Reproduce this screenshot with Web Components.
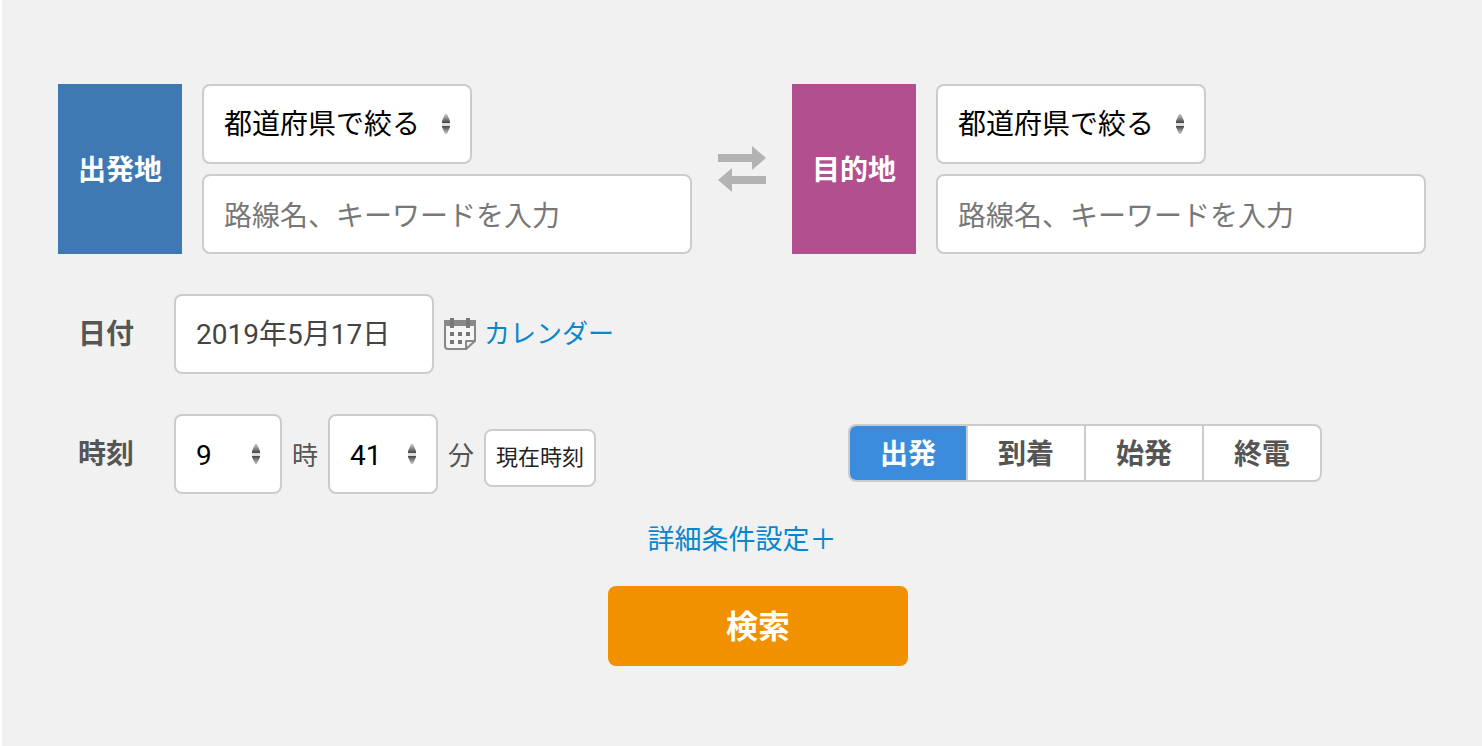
<!DOCTYPE html>
<html lang="ja">
<head>
<meta charset="utf-8">
<meta name="viewport" content="width=device-width, initial-scale=1">
<title>時刻表検索</title>
<style>
  body {
    margin: 0;
    font: 28px/40px Roboto, "Noto Sans CJK JP", sans-serif;
    color: #555;
    background: #fff;
  }
</style>
</head>
<body>
<timetable-search></timetable-search>

<script>
/**
 * Timetable search form
 *
 * <timetable-search> holds the whole form. The smaller elements are the place
 * picker, the pulldown around a native select and the segmented radio tabs.
 */

// Styles shared by every boxed field
const fieldStyle = `
  box-sizing: border-box;
  height: 80px;
  margin: 0;
  padding: 4px 20px 0;
  border: 2px solid #ccc;
  border-radius: 8px;
  background: #fff;
  font: inherit;
`;

// Pulldown : draws the box and the arrows around a slotted select
class PulldownBox extends HTMLElement {

  constructor() {
    super();
    const sdom = this.attachShadow({mode: 'open'});
    sdom.innerHTML = `
      <style>
        :host { display: inline-grid; align-items: center; }
        ::slotted(select) {
          ${fieldStyle}
          grid-area: 1 / 1;
          width: 100%;
          padding-top: var(--select-top, 4px);
          padding-right: 48px;
          appearance: none;
          color: #000;
        }
        svg { grid-area: 1 / 1; justify-self: end; margin-right: 22px; pointer-events: none; z-index: 1; }
      </style>
      <slot></slot>
      <svg width="8" height="20" viewBox="0 0 8 20" aria-hidden="true">
        <defs>
          <linearGradient id="up" x1="0" y1="0" x2="0" y2="1">
            <stop offset="0" stop-color="#ccc"/><stop offset="1" stop-color="#444"/>
          </linearGradient>
          <linearGradient id="down" x1="0" y1="0" x2="0" y2="1">
            <stop offset="0" stop-color="#444"/><stop offset="1" stop-color="#ccc"/>
          </linearGradient>
        </defs>
        <rect y="8" width="8" height="4" fill="#ddd"/>
        <path d="M3 0h2l3 7v2H0V7z" fill="url(#up)"/>
        <path d="M0 12h8v1l-3 7H3l-3-7z" fill="url(#down)"/>
      </svg>
    `;
  }

}

// Place picker : coloured heading, prefecture filter and keyword
class PlacePicker extends HTMLElement {

  constructor() {
    super();
    const sdom = this.attachShadow({mode: 'open'});
    sdom.innerHTML = `
      <style>
        :host { display: flex; gap: 20px; }
        label {
          display: flex; align-items: center; flex: none;
          padding: 4px 20px 0;
          background: var(--place-color, #3e79b4);
          color: #fff; font-weight: bold;
        }
        .fields { display: flex; flex-direction: column; align-items: flex-start; gap: 10px; flex: 1; min-width: 0; }
        pulldown-box { --select-top: 2px; width: 270px; }
        input { ${fieldStyle} width: 100%; color: #444; }
        input::placeholder { color: #777; opacity: 1; }
      </style>
      <label for="word"><slot></slot></label>
      <div class="fields">
        <pulldown-box>
          <select aria-label="都道府県"><option>都道府県で絞る</option></select>
        </pulldown-box>
        <input id="word" type="text" placeholder="路線名、キーワードを入力">
      </div>
    `;
  }

}

// Segment tabs : one radio for each name in the 'items' attribute
class SegmentTabs extends HTMLElement {

  constructor() {
    super();
    this.attachShadow({mode: 'open'});
  }

  connectedCallback() {
    const items = this.getAttribute('items').split(',');
    this.shadowRoot.innerHTML = `
      <style>
        :host {
          display: flex; overflow: hidden;
          border: 2px solid #ccc; border-radius: 8px;
          background: #fff; font-weight: bold;
        }
        input { position: absolute; opacity: 0; margin: 0; }
        label { width: 116px; padding-top: 4px; line-height: 50px; text-align: center; cursor: pointer; }
        label + input + label { border-left: 2px solid #ccc; }
        input:checked + label { background: #3c8cdd; color: #fff; }
        input:focus-visible + label { text-decoration: underline; }
      </style>
      ${items.map((item, i) => `
        <input type="radio" name="type" id="type${i}"${i === 0 ? ' checked' : ''}>
        <label for="type${i}">${item}</label>
      `).join('')}
    `;
  }

}

// Whole form
class TimetableSearch extends HTMLElement {

  constructor() {
    super();
    const sdom = this.attachShadow({mode: 'open'});
    sdom.innerHTML = `
      <style>
        :host { display: block; box-sizing: border-box; min-height: 100vh; margin-left: 2px; padding: 84px 56px 80px; background: #f1f1f1; }
        form { display: flex; flex-direction: column; gap: 40px; }
        .places, .row, .time, .date { display: flex; align-items: center; }
        .row { height: 80px; }
        place-picker { flex: 1; min-width: 0; }
        .goal { --place-color: #b14f8f; }
        button { margin: 0; font: inherit; cursor: pointer; }
        .swap { display: flex; justify-content: center; width: 100px; padding: 0; border: 0; background: none; }
        .title { width: 96px; margin-left: 20px; padding-top: 2px; font-weight: bold; }
        a { color: #0787cd; font-size: 27px; text-decoration: none; }
        .date input { ${fieldStyle} width: 260px; padding: 0 20px 4px; color: #444; }
        .calendar { display: flex; align-items: center; gap: 8px; margin-left: 10px; font-size: 26px; }
        .time { align-items: baseline; gap: 10px; font-size: 26px; }
        .time pulldown-box { width: 108px; font-size: 28px; }
        .time .minute { width: 110px; }
        .now {
          height: 58px; padding: 0 10px;
          border: 2px solid #ccc; border-radius: 8px;
          background: #fff; color: #222; font-size: 22px;
        }
        segment-tabs { margin: 0 104px 2px auto; }
        .actions { display: flex; flex-direction: column; align-items: center; gap: 26px; margin-top: -14px; }
        .search {
          width: 300px; height: 80px; margin-left: 32px; padding: 2px 0 0;
          border: 0; border-radius: 8px;
          background: #f29100; color: #fff; font-size: 32px; font-weight: bold;
        }
      </style>
      <form>
        <div class="places">
          <place-picker class="start">出発地</place-picker>
          <button class="swap" type="button" aria-label="入れ替え">
            <svg width="48" height="46" viewBox="0 0 48 46" fill="#b3b3b3">
              <path d="M0 8h34V0l14 12-14 12v-8H0z"/>
              <path d="M48 30H14v-8L0 34l14 12v-8h34z"/>
            </svg>
          </button>
          <place-picker class="goal">目的地</place-picker>
        </div>
        <div class="row">
          <label class="title" for="date">日付</label>
          <div class="date">
            <input id="date" type="text" value="2019年5月17日">
            <a class="calendar" href="#calendar">
              <svg width="32" height="32" viewBox="0 0 32 32" aria-hidden="true">
                <path d="M1 7h30v15l-9 9H4q-3 0-3-3z" fill="#f6f6f6" stroke="#888" stroke-width="2"/>
                <path d="M0 2h32v6H0z" fill="#888"/>
                <path d="M6 0h4v10H6zM22 0h4v10h-4z" fill="#777"/>
                <path d="M6 14h4v4H6zm8 0h4v4h-4zm8 0h4v4h-4zM6 22h4v4H6zm8 0h4v4h-4z" fill="#777"/>
                <path d="M22 31v-8h9z" fill="#eee" stroke="#888" stroke-width="2" stroke-linejoin="round"/>
              </svg>
              カレンダー
            </a>
          </div>
        </div>
        <div class="row">
          <label class="title" for="hour">時刻</label>
          <div class="time">
            <pulldown-box><select id="hour"></select></pulldown-box>
            <label for="hour">時</label>
            <pulldown-box class="minute"><select id="minute"></select></pulldown-box>
            <label for="minute">分</label>
            <button class="now" type="button">現在時刻</button>
          </div>
          <segment-tabs items="出発,到着,始発,終電"></segment-tabs>
        </div>
        <div class="actions">
          <a href="#detail">詳細条件設定＋</a>
          <button class="search" type="submit">検索</button>
        </div>
      </form>
    `;
    this.fillSelect('hour', 24, 9);
    this.fillSelect('minute', 60, 41);
  }

  connectedCallback() {
    this.shadowRoot.querySelector('.swap').addEventListener('click', this.swapPlaces.bind(this));
    this.shadowRoot.querySelector('.now').addEventListener('click', this.setNow.bind(this));
    this.shadowRoot.querySelector('form').addEventListener('submit', e => e.preventDefault());
  }

  fillSelect(id, count, selected) {
    const select = this.shadowRoot.getElementById(id);
    for (let i = 0; i < count; i++) {
      select.add(new Option(i, i, i === selected, i === selected));
    }
  }

  swapPlaces() {
    const [start, goal] = [...this.shadowRoot.querySelectorAll('place-picker')]
      .map(picker => picker.shadowRoot.getElementById('word'));
    [start.value, goal.value] = [goal.value, start.value];
  }

  setNow() {
    const now = new Date();
    this.shadowRoot.getElementById('hour').value = now.getHours();
    this.shadowRoot.getElementById('minute').value = now.getMinutes();
  }

}

// Register elements
window.customElements.define('pulldown-box', PulldownBox);
window.customElements.define('place-picker', PlacePicker);
window.customElements.define('segment-tabs', SegmentTabs);
window.customElements.define('timetable-search', TimetableSearch);
</script>
</body>
</html>
